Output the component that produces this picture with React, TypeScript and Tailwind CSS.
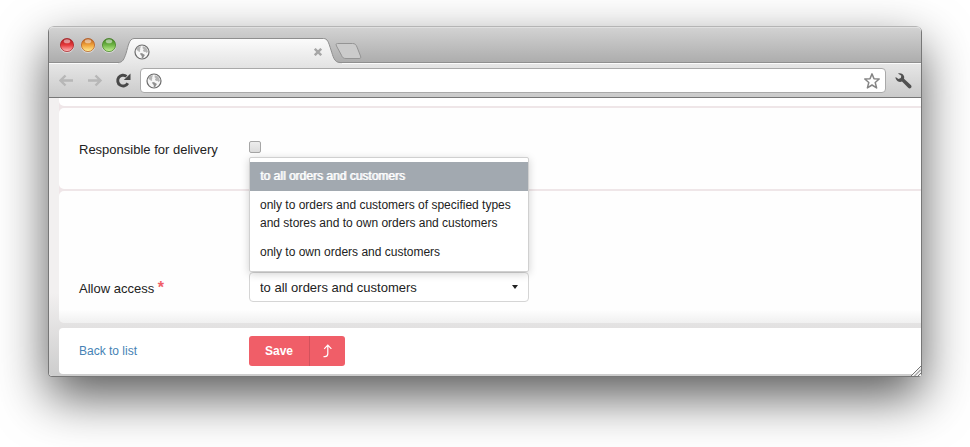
import React, { useState } from 'react';

const ACCESS_OPTIONS = [
    { value: 'all', label: 'to all orders and customers' },
    { value: 'types', label: 'only to orders and customers of specified types and stores and to own orders and customers' },
    { value: 'own', label: 'only to own orders and customers' },
];

function Globe() {
    return (
        <svg className="w-4 h-4 shrink-0" viewBox="0 0 16 16" fill="none">
            <circle cx="8" cy="8" r="7" fill="#f6f6f6" stroke="#6b6b6b" strokeWidth="1.2" />
            <path d="M2.400 5.200 4.200 2.900l2.300-.9.300 1.300-.9 1 .7.700-.8 1.100.4 1.400-1.300.500-.6-1.200-1.300-.2z" fill="#b5b5b5" />
            <path d="m8.800 2.200 2.400.7 1.900 2.100.8 2.700-1.300 1.300-1.100-1.300-1.500.4-1.100-1.600.9-1.200-1.300-1.100z" fill="#b5b5b5" />
            <path d="m6.300 9 1.900.2 1.500 1 1.200.7-.9 1.600-1.100 1.700-1.200-.2.100-1.900-1.300-1.400z" fill="#8f8f8f" />
        </svg>
    );
}

function TrafficLights() {
    const lights = [
        { id: 'red', cx: 8, dark: '#a3181c', mid: '#e6393b', light: '#ffc0c0' },
        { id: 'amber', cx: 29, dark: '#b0561a', mid: '#f0a23a', light: '#fff19a' },
        { id: 'green', cx: 50, dark: '#3c7a1d', mid: '#6fb545', light: '#c9f39a' },
    ];

    return (
        <svg className="w-[58px] h-4 shrink-0" viewBox="0 0 58 16">
            {lights.map((l) => (
                <g key={l.id}>
                    <defs>
                        <linearGradient id={l.id} x1="0" y1="0" x2="0" y2="1">
                            <stop offset="0" stopColor={l.dark} />
                            <stop offset="0.5" stopColor={l.mid} />
                            <stop offset="1" stopColor={l.light} />
                        </linearGradient>
                    </defs>
                    <circle cx={l.cx} cy="8.800" r="7.200" fill="#fff" opacity="0.45" />
                    <circle cx={l.cx} cy="8" r="6.600" fill={`url(#${l.id})`} stroke={l.dark} strokeOpacity="0.7" />
                    <ellipse cx={l.cx} cy="4.200" rx="3.200" ry="2" fill="#fff" opacity="0.5" />
                </g>
            ))}
        </svg>
    );
}

function TabStrip() {
    return (
        <div className="flex items-end h-[37px] pl-2.5 rounded-t bg-linear-to-b from-[#d3d3d3] to-[#ababab] shadow-[inset_0_1px_0_#e0e0e0,inset_0_-1px_0_#fbfbfb,inset_0_-2px_0_#8f8f8f]">
            <div className="self-start pt-2.5 pr-px">
                <TrafficLights />
            </div>
            <svg className="w-4 h-[26px] shrink-0" viewBox="0 0 16 26">
                <defs>
                    <linearGradient id="tabFill" x1="0" y1="0" x2="0" y2="26" gradientUnits="userSpaceOnUse">
                        <stop offset="0" stopColor="#fbfbfb" />
                        <stop offset="1" stopColor="#e6e6e6" />
                    </linearGradient>
                </defs>
                <path d="M0 26v-1.500C5 24.500 6 21 8 15.500 10.500 7 11 1 16 .5V26z" fill="url(#tabFill)" />
                <path d="M0 24.500C5 24.500 6 21 8 15.500 10.500 7 11 1 16 .5" fill="none" stroke="#8f8f8f" />
            </svg>
            <div className="flex items-center justify-between w-[188px] h-[26px] border-t border-[#8f8f8f] bg-linear-to-b from-[#fbfbfb] to-[#e6e6e6]">
                <Globe />
                <button type="button" aria-label="Close tab">
                    <svg className="w-2 h-2" viewBox="0 0 8 8" stroke="#a6a6a6" strokeWidth="2.400">
                        <path d="m.8.8 6.400 6.400M7.200.8.8 7.200" />
                    </svg>
                </button>
            </div>
            <svg className="w-5 h-[26px] shrink-0" viewBox="0 0 20 26">
                <path d="M20 26v-1.500h-2C12 24.500 11 18 9 12 6.500 4 5.500.5 1.500.5H0V26z" fill="url(#tabFill)" />
                <path d="M0 .5h1.500C5.500.5 6.500 4 9 12c2 6 3 12.500 9 12.500h2" fill="none" stroke="#8f8f8f" />
            </svg>
            <button type="button" aria-label="New tab" className="-ml-[7px] mb-[5px]">
                <svg className="w-7 h-4" viewBox="0 0 28 16">
                    <path d="M2.500.5h15c2.500 0 3.500 1 4.500 3.500l3.500 9c.7 1.800.2 2.500-1.500 2.500H11c-2.500 0-3.500-.8-4.500-3.200L1.500 3C.8 1.200 1 .5 2.500.5z" fill="#cbcbcb" stroke="#949494" />
                </svg>
            </button>
        </div>
    );
}

function Toolbar() {
    return (
        <div className="flex items-center h-[34px] pl-2.5 pr-[9px] border-b border-[#777] bg-linear-to-b from-[#e6e6e6] to-[#cacaca]">
            <div className="flex items-center gap-3 pr-[9px]">
                <button type="button" aria-label="Back">
                    <svg className="w-4 h-4" viewBox="0 0 16 16" fill="none" stroke="#b7b7b7" strokeWidth="2.400">
                        <path d="M14 7.500H1.500M6.500 2.500l-5 5 5 5" />
                    </svg>
                </button>
                <button type="button" aria-label="Forward">
                    <svg className="w-4 h-4" viewBox="0 0 16 16" fill="none" stroke="#b7b7b7" strokeWidth="2.400">
                        <path d="M1 7.500h12.500M8.500 2.500l5 5-5 5" />
                    </svg>
                </button>
                <button type="button" aria-label="Reload">
                    <svg className="w-4 h-4" viewBox="0 0 16 16" fill="none">
                        <path d="M12.800 10.300A5.400 5.400 0 1 1 11.500 3.400" stroke="#484848" strokeWidth="2.900" />
                        <path d="M15.500.6v6.300H8.800z" fill="#484848" />
                    </svg>
                </button>
            </div>
            <div className="flex items-center flex-1 h-[25px] px-[5px] gap-2 bg-white border border-[#a9a9a9] rounded">
                <Globe />
                <input type="text" aria-label="Address" className="flex-1 min-w-0 text-[13px] outline-none" />
                <button type="button" aria-label="Bookmark">
                    <svg className="w-4 h-4" viewBox="0 0 16 16" fill="none" stroke="#858585" strokeWidth="1.500" strokeLinejoin="round">
                        <path d="m8 .9 2 4.900 5.200.2-4 3.500 1.400 5.400L8 12l-4.600 2.900 1.400-5.400-4-3.500L6 5.800z" />
                    </svg>
                </button>
            </div>
            <button type="button" aria-label="Settings" className="ml-[9px]">
                <svg className="w-[17px] h-4" viewBox="0 0 17 16">
                    <path d="M3 .6C5.500-.3 8.200.9 9 3.300c.3.900.2 1.700 0 2.500l6.800 6.200c.9.800.9 2 .2 2.800-.8.800-2 .8-2.800 0L7 8.600c-2.400.8-5-.1-6-2.300C.6 5.400.5 4.600.6 3.900l2.900 2 2.300-.8.500-2.300z" fill="#505050" />
                </svg>
            </button>
        </div>
    );
}

export default function App() {
    const [access, setAccess] = useState('all');
    const [delivery, setDelivery] = useState(false);

    return (
        <div className="px-12 pt-[26px] pb-[70px] bg-white overflow-hidden font-['Liberation_Sans',Arial,sans-serif] text-[13px] leading-[18px] text-[#222]">
            <div className="relative border border-[#777] border-t-[#b5b5b5] rounded-t-md rounded-b-sm shadow-[0_20px_50px_rgba(0,0,0,0.65)]">
                <TabStrip />
                <Toolbar />

                <form
                    onSubmit={(e) => e.preventDefault()}
                    className="flex flex-col pl-2.5 pb-0.5 rounded-b-sm bg-linear-to-b from-[#f2f0f0] from-70% to-[#cdcdcd]"
                >
                    <div className="flex flex-col gap-0.5 bg-[#efe6e8] rounded-bl-[5px]">
                        <div className="h-2 bg-white rounded-bl-[5px]" />

                        <div className="flex items-start px-5 pt-[33px] pb-[30px] bg-[#fefefe] rounded-l-[5px]">
                            <label htmlFor="delivery" className="w-[170px] shrink-0">
                                Responsible for delivery
                            </label>
                            <input
                                id="delivery"
                                type="checkbox"
                                checked={delivery}
                                onChange={(e) => setDelivery(e.target.checked)}
                                className="appearance-none w-3 h-3 rounded-xs border border-[#a6a6a6] bg-linear-to-b from-[#ededed] to-[#dcdcdc] checked:from-[#888] checked:to-[#777]"
                            />
                        </div>

                        <div className="flex items-end px-5 pt-[81px] pb-[21px] rounded-l-[5px] bg-linear-to-b from-[#fefefe] from-90% to-[#f0f0f0]">
                            <label htmlFor="access" className="w-[170px] mb-1 shrink-0">
                                Allow access <span className="text-base leading-none font-bold text-[#f05e68]">*</span>
                            </label>
                            <div className="relative w-[280px]">
                                <select
                                    id="access"
                                    value={access}
                                    onChange={(e) => setAccess(e.target.value)}
                                    className="block appearance-none w-full h-[30px] pl-2.5 pr-8 pt-0.5 bg-white border border-[#d5d5d5] rounded truncate outline-none"
                                >
                                    {ACCESS_OPTIONS.map((o) => (
                                        <option key={o.value} value={o.value}>{o.label}</option>
                                    ))}
                                </select>
                                <svg className="absolute right-2.5 top-[13px] w-2 h-1 pointer-events-none" viewBox="0 0 8 4">
                                    <path d="M1 0h6L4 4z" fill="#222" />
                                </svg>

                                <ul
                                    role="listbox"
                                    aria-label="Allow access"
                                    className="absolute left-0 bottom-full w-full py-1 bg-white border border-[#d0d0d0] rounded-xs shadow-[0_2px_8px_rgba(0,0,0,0.18)] text-xs leading-[18px]"
                                >
                                    {ACCESS_OPTIONS.map((o) => (
                                        <li
                                            key={o.value}
                                            role="option"
                                            aria-selected={o.value === access}
                                            onClick={() => setAccess(o.value)}
                                            className={`px-2.5 pt-[5px] pb-1.5 cursor-pointer ${o.value === access ? 'bg-[#a2a9b0] text-white [text-shadow:1px_0_0_rgba(255,255,255,0.85)]' : ''}`}
                                        >
                                            {o.label}
                                        </li>
                                    ))}
                                </ul>
                            </div>
                        </div>
                    </div>

                    <div className="flex items-center mt-[5px] px-5 py-2 bg-white rounded-l text-xs">
                        <div className="w-[170px] shrink-0">
                            <a href="#list" className="text-[#4682b4]">Back to list</a>
                        </div>
                        <div className="flex h-[30px] rounded-[3px] overflow-hidden bg-[#f05e68] text-white">
                            <button type="submit" className="w-[60px] font-bold">Save</button>
                            <button
                                type="button"
                                aria-label="Save and go back"
                                className="flex items-center justify-center w-9 border-l border-[#d2525c]"
                            >
                                <svg className="w-2.5 h-3.5" viewBox="0 0 10 14" fill="none" stroke="#fff" strokeWidth="1.200">
                                    <path d="M.5 12.600h1.500c2 0 2.800-1 2.800-3V1.200M1.200 4.800l3.600-3.600L8.400 4.800" />
                                </svg>
                            </button>
                        </div>
                    </div>
                </form>

                <svg className="absolute right-0 bottom-0 w-2.5 h-2.5" viewBox="0 0 10 10" stroke="#777" fill="none">
                    <path d="M10 0v10H0z" fill="#f0f0f0" stroke="none" />
                    <path d="M0 10 10 0M3.500 10 10 3.500M7 10l3-3" />
                </svg>
            </div>
        </div>
    );
}
